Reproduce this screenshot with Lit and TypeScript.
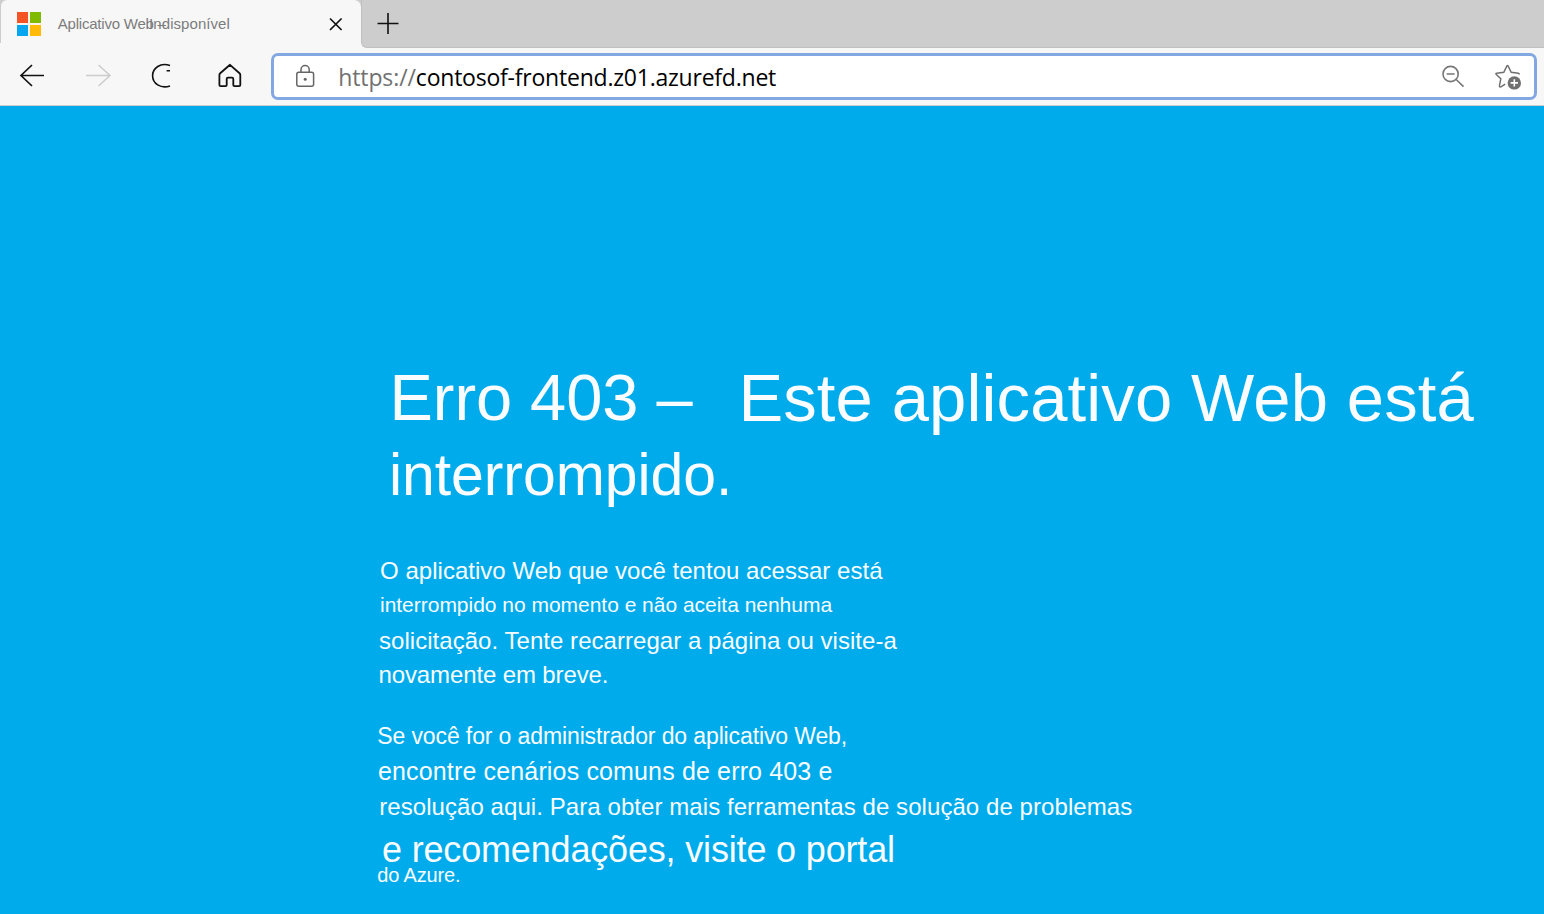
import { LitElement, html, css, svg } from "lit";
import { customElement } from "lit/decorators.js";

const icon = (cls: string, w: number, h: number, body: unknown) =>
  html`<svg class=${cls} width=${w} height=${h} viewBox="0 0 ${w} ${h}" fill="none" aria-hidden="true">${body}</svg>`;

@customElement("browser-tabs")
export class BrowserTabs extends LitElement {
  static styles = css`
    :host {
      display: flex;
      height: 48px;
      background: #f7f7f7;
      font-family: "Liberation Sans", Arial, sans-serif;
    }
    .edge { width: 1px; height: 43px; background: #cdcdcd; }
    .tabwrap { background: linear-gradient(#cdcdcd 12px, #f7f7f7 12px); }
    .tab {
      display: flex;
      box-sizing: border-box;
      width: 360px;
      height: 48px;
      padding-left: 16px;
      background: #f7f7f7;
      border-radius: 6px 7px 0 0;
    }
    .logo { margin-top: 12px; flex: none; }
    .title {
      display: flex;
      width: 270px;
      margin: 15px 0 0 16.8px;
      font-size: 15px;
      line-height: 17px;
      color: #7c7c7c;
      white-space: pre;
    }
    .first { width: 91.3px; letter-spacing: -0.22px; }
    .second { letter-spacing: 0.06px; }
    .close { margin-top: 17px; flex: none; }
    .rest {
      flex: 1;
      box-sizing: border-box;
      height: 48px;
      padding: 12px 0 0 14.5px;
      background: #cdcdcd;
      border-bottom: 1px solid #c0c0c0;
      border-left: 1px solid #c0c0c0;
      border-bottom-left-radius: 6px;
    }
    svg { display: block; }
  `;

  render() {
    return html`
      <div class="edge"></div>
      <div class="tabwrap">
        <div class="tab">
          ${icon("logo", 24, 24, svg`
            <rect width="24" height="24" fill="#fbf3ec"/>
            <rect width="11" height="11" fill="#f35325"/>
            <rect x="13" width="11" height="11" fill="#80bb03"/>
            <rect y="13" width="11" height="11" fill="#05a6f0"/>
            <rect x="13" y="13" width="11" height="11" fill="#ffba08"/>`)}
          <div class="title"><span class="first">Aplicativo Web –</span><span class="second">Indisponível</span></div>
          ${icon("close", 15, 15, svg`<path d="M2 1.5 13.6 13M13.6 1.5 2 13" stroke="#111" stroke-width="1.7"/>`)}
        </div>
      </div>
      <div class="rest">${icon("", 22, 23, svg`<path d="M.5 11.5H21.5M11 1V22" stroke="#111" stroke-width="1.6"/>`)}</div>
    `;
  }
}

@customElement("browser-toolbar")
export class BrowserToolbar extends LitElement {
  static styles = css`
    :host {
      display: flex;
      box-sizing: border-box;
      height: 58px;
      padding: 4.5px 7px 0 19px;
      background: #f7f7f7;
      border-bottom: 1px solid #cfcfcf;
    }
    svg { display: block; flex: none; }
    .nav { display: flex; width: 251.5px; padding-top: 10.5px; }
    .fwd { margin-left: 41px; }
    .reload { margin-left: 39px; }
    .home { margin-left: 47px; }
    .address {
      flex: 1;
      display: flex;
      box-sizing: border-box;
      height: 47px;
      padding: 8.5px 12.5px 0 21.5px;
      background: #fff;
      border: 3px solid #83a7e0;
      border-radius: 7px;
    }
    .url {
      flex: 1;
      margin: -3px 0 0 23.2px;
      font: 23px/32px "Open Sans", "Segoe UI", sans-serif;
      letter-spacing: -0.22px;
      color: #000;
      white-space: pre;
    }
    .scheme { color: #717171; letter-spacing: -0.1px; }
    .star { margin-left: 30px; }
  `;

  render() {
    return html`
      <div class="nav">
        ${icon("back", 26, 25, svg`<path d="M25 12.5H2M13 2 2 12.5 13 23" stroke="#111" stroke-width="1.7"/>`)}
        ${icon("fwd", 26, 25, svg`<path d="M0 12.5H24M12.5 2 24 12.5 12.5 23" stroke="#cbcbcb" stroke-width="1.5"/>`)}
        ${icon("reload", 20, 25, svg`<path d="M19 2.6C9.5-.8 1.6 5 1.6 12.7 1.6 20.3 9.5 26.2 19 22.9M15.6 7.8H19" stroke="#111" stroke-width="1.6"/>`)}
        ${icon("home", 24, 25, svg`<path d="M12 1.8 2.2 10.3Q1.4 11 1.4 12V22Q1.4 23.2 2.6 23.2H7.6Q8.7 23.2 8.7 22V16Q8.7 14.6 10 14.6H14Q15.3 14.6 15.3 16V22Q15.3 23.2 16.4 23.2H21Q22.3 23.2 22.3 22V12Q22.3 11 21.5 10.3Z" stroke="#111" stroke-width="1.8" stroke-linejoin="round"/>`)}
      </div>
      <div class="address">
        ${icon("lock", 20, 25, svg`
          <rect x="1.8" y="8.3" width="16.8" height="14" rx="2" stroke="#666" stroke-width="1.5"/>
          <path d="M6 8V5.6a4.1 4.1 0 0 1 8.2 0V8" stroke="#666" stroke-width="1.5"/>
          <circle cx="10.2" cy="15.2" r="1.5" fill="#666"/>`)}
        <div class="url"><span class="scheme">https://</span>contosof-frontend.z01.azurefd.net</div>
        ${icon("zoom", 24, 25, svg`
          <circle cx="9.6" cy="10" r="7.6" stroke="#777" stroke-width="1.6"/>
          <path d="M15.2 15.5 22.5 22.6M5.6 10H13.6" stroke="#777" stroke-width="1.6"/>`)}
        ${icon("star", 27, 27, svg`
          <path d="M6.3 22.6C5 23.4 4.2 22.8 4.5 21.4L5.8 14.8 1.3 10.6C.6 9.8.9 9.3 1.8 9.2L8.8 8.3 11.9 2Q12.5 1.1 13.1 2L16.2 8.3 23.4 9.2Q24.6 9.5 23.7 10.5M6.3 22.6 10.2 20.2" stroke="#707070" stroke-width="1.5"/>
          <circle cx="19.3" cy="18.9" r="6.7" fill="#707070"/>
          <path d="M15.6 18.9H23M19.3 15.2V22.6" stroke="#fff" stroke-width="1.6"/>`)}
      </div>
    `;
  }
}

@customElement("error-page")
export class ErrorPage extends LitElement {
  static styles = css`
    :host {
      display: block;
      box-sizing: border-box;
      flex: 1;
      padding: 254px 0 0 377px;
      background: #00abec;
      color: #fafdff;
      font-family: "Liberation Sans", Arial, sans-serif;
      white-space: pre;
    }
    h1 { margin: 0; font-weight: 400; }
    .row { display: flex; align-items: flex-start; height: 75px; padding-left: 12.5px; }
    .code { width: 348.9px; font-size: 65px; line-height: 75px; letter-spacing: -0.05px; }
    .what { font-size: 67px; line-height: 75px; letter-spacing: 0.13px; }
    .state { margin-top: 7px; padding-left: 12px; font-size: 59px; line-height: 66px; letter-spacing: -0.08px; }
    .body { margin-top: 49px; }
    .admin { margin-top: 35px; }
    .a1 { padding-left: 3px; font-size: 24px; line-height: 27px; letter-spacing: 0.03px; }
    .a2 { margin-top: 9px; padding-left: 3px; font-size: 21px; line-height: 23px; letter-spacing: -0.02px; }
    .a3 { margin-top: 11px; padding-left: 2px; font-size: 24px; line-height: 27px; letter-spacing: 0.04px; }
    .a4 { margin-top: 7px; padding-left: 1.5px; font-size: 24px; line-height: 27px; letter-spacing: -0.12px; }
    .b1 { padding-left: 0.3px; font-size: 23px; line-height: 26px; letter-spacing: -0.117px; }
    .b2 { margin-top: 8px; padding-left: 1px; font-size: 25px; line-height: 28px; letter-spacing: 0.15px; }
    .b3 { margin-top: 8px; padding-left: 2.2px; font-size: 24px; line-height: 27px; letter-spacing: 0.07px; }
    .b4 { margin-top: 9px; padding-left: 5px; font-size: 36px; line-height: 41px; letter-spacing: -0.17px; }
    .b5 { margin-top: -6px; padding-left: 0.3px; font-size: 20px; line-height: 22px; letter-spacing: -0.15px; }
  `;

  render() {
    return html`<h1><div class="row"><div class="code">Erro 403 –</div><div class="what">Este aplicativo Web está</div></div><div class="state">interrompido.</div></h1><div class="body"><div class="a1">O aplicativo Web que você tentou acessar está</div><div class="a2">interrompido no momento e não aceita nenhuma</div><div class="a3">solicitação. Tente recarregar a página ou visite-a</div><div class="a4">novamente em breve.</div></div><div class="admin"><div class="b1">Se você for o administrador do aplicativo Web,</div><div class="b2">encontre cenários comuns de erro 403 e</div><div class="b3">resolução aqui. Para obter mais ferramentas de solução de problemas</div><div class="b4">e recomendações, visite o portal</div><div class="b5">do Azure.</div></div>`;
  }
}

@customElement("app-root")
export class AppRoot extends LitElement {
  static styles = css`
    :host {
      display: flex;
      flex-direction: column;
      height: 914px;
      overflow: hidden;
    }
  `;

  render() {
    return html`<browser-tabs></browser-tabs><browser-toolbar></browser-toolbar><error-page></error-page>`;
  }
}
